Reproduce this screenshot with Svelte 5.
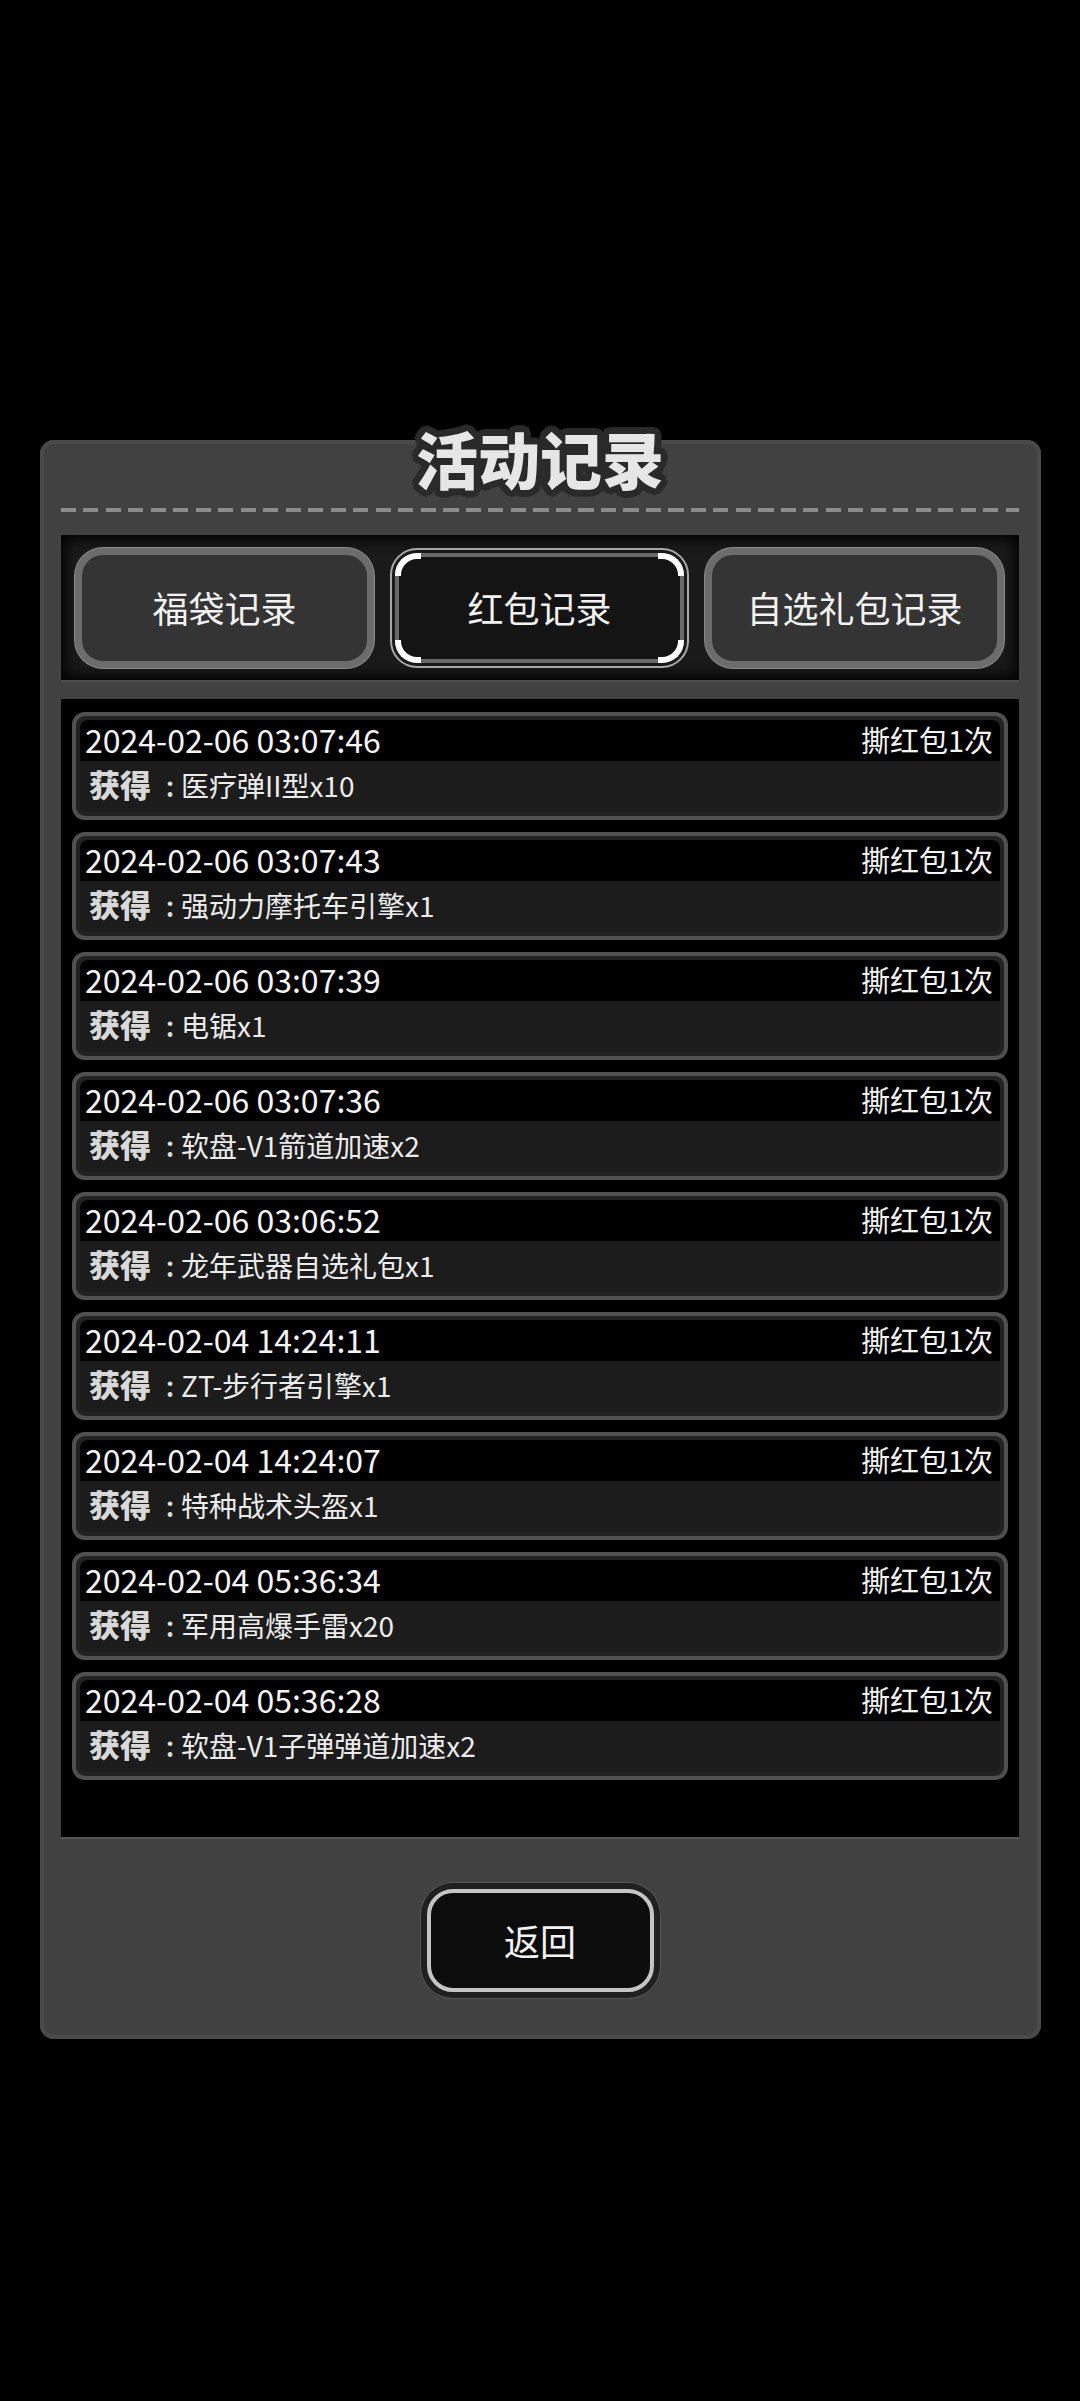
<script lang="ts">
  const tabs = [
    { label: '福袋记录', active: false },
    { label: '红包记录', active: true },
    { label: '自选礼包记录', active: false }
  ];

  const records = [
    { time: '2024-02-06 03:07:46', item: '医疗弹II型x10' },
    { time: '2024-02-06 03:07:43', item: '强动力摩托车引擎x1' },
    { time: '2024-02-06 03:07:39', item: '电锯x1' },
    { time: '2024-02-06 03:07:36', item: '软盘-V1箭道加速x2' },
    { time: '2024-02-06 03:06:52', item: '龙年武器自选礼包x1' },
    { time: '2024-02-04 14:24:11', item: 'ZT-步行者引擎x1' },
    { time: '2024-02-04 14:24:07', item: '特种战术头盔x1' },
    { time: '2024-02-04 05:36:34', item: '军用高爆手雷x20' },
    { time: '2024-02-04 05:36:28', item: '软盘-V1子弹弹道加速x2' }
  ];
</script>

<div class="screen">
  <section class="panel">
    <h1 class="title">活动记录</h1>
    <div class="dashes"></div>

    <div class="tabs">
      {#each tabs as tab}
        <button class="tab" class:active={tab.active}>
          {#if tab.active}
            <span class="corner tl"></span>
            <span class="corner tr"></span>
            <span class="corner bl"></span>
            <span class="corner br"></span>
          {/if}
          {tab.label}
        </button>
      {/each}
    </div>

    <div class="list">
      {#each records as record}
        <div class="row">
          <div class="row-head">
            <span>{record.time}</span>
            <span class="action">撕红包1次</span>
          </div>
          <div class="row-body"><b>获得<i>：</i></b><span class="item">{record.item}</span></div>
        </div>
      {/each}
    </div>

    <div class="footer">
      <button class="back">返回</button>
    </div>
  </section>
</div>

<style>
  :global(body) {
    margin: 0;
    background: #000;
  }

  .screen {
    box-sizing: border-box;
    width: 1080px;
    height: 2401px;
    padding: 440px 39px 0 40px;
    background: #000;
    font-family: "Noto Sans CJK SC", "Noto Sans", sans-serif;
    color: #f0f0f0;
  }

  .panel {
    box-sizing: border-box;
    height: 1599px;
    padding: 0 22px 0 21px;
    background: #414141;
    border-radius: 14px;
    box-shadow: inset 0 0 0 4px #4a4a4a;
  }

  .title {
    position: relative;
    top: -12px;
    margin: 0;
    height: 60px;
    font-size: 62px;
    font-weight: 900;
    line-height: 60px;
    text-align: center;
    color: #e6e6e6;
    text-shadow:
      7px 0 0 #2a2a2a, -7px 0 0 #2a2a2a, 0 7px 0 #2a2a2a, 0 -7px 0 #2a2a2a,
      5px 5px 0 #2a2a2a, -5px 5px 0 #2a2a2a, 5px -5px 0 #2a2a2a, -5px -5px 0 #2a2a2a,
      6px 3px 0 #2a2a2a, -6px 3px 0 #2a2a2a, 6px -3px 0 #2a2a2a, -6px -3px 0 #2a2a2a,
      3px 6px 0 #2a2a2a, -3px 6px 0 #2a2a2a, 3px -6px 0 #2a2a2a, -3px -6px 0 #2a2a2a;
  }

  .dashes {
    height: 4px;
    margin-top: 8px;
    background: repeating-linear-gradient(90deg, #8c8c8c 0 15px, transparent 15px 22.5px);
  }

  .tabs {
    box-sizing: border-box;
    display: grid;
    grid-template-columns: repeat(3, 299px);
    gap: 16px;
    height: 147px;
    margin-top: 23px;
    padding: 13px 14px;
    background: #1a1a1a;
    border-bottom: 2px solid #4f4f4f;
    box-shadow: inset 0 0 14px 4px #000;
  }

  .tab {
    position: relative;
    box-sizing: border-box;
    height: 120px;
    padding: 0 0 2px;
    font: inherit;
    font-size: 36px;
    color: #f2f2f2;
    background: #343434;
    border: 7px solid #6c6c6c;
    border-radius: 28px;
    box-shadow: 0 0 0 1px #8a8a8a;
  }

  .tab.active {
    background: #141414;
    border: 4px solid #686868;
    border-radius: 22px;
    outline: 2px solid #a8a8a8;
    outline-offset: 3px;
    box-shadow: none;
    margin: 5px;
    height: 110px;
    width: 289px;
  }

  .corner {
    position: absolute;
    width: 20px;
    height: 17px;
    border: 0 solid #fff;
  }

  .tl {
    top: -4px;
    left: -4px;
    border-width: 6px 0 0 6px;
    border-top-left-radius: 22px;
  }

  .tr {
    top: -4px;
    right: -4px;
    border-width: 6px 6px 0 0;
    border-top-right-radius: 22px;
  }

  .bl {
    bottom: -4px;
    left: -4px;
    border-width: 0 0 6px 6px;
    border-bottom-left-radius: 22px;
  }

  .br {
    bottom: -4px;
    right: -4px;
    border-width: 0 6px 6px 0;
    border-bottom-right-radius: 22px;
  }

  .list {
    box-sizing: border-box;
    display: flex;
    flex-direction: column;
    gap: 12px;
    height: 1140px;
    margin-top: 17px;
    padding: 13px 11px;
    background: #000;
    border-bottom: 2px solid #555;
  }

  .row {
    box-sizing: border-box;
    height: 108px;
    padding: 4px;
    background: #222;
    border: 4px solid #505050;
    border-radius: 13px;
  }

  .row-head {
    box-sizing: border-box;
    display: flex;
    justify-content: space-between;
    align-items: center;
    height: 41px;
    padding: 0 7px 2px 5px;
    background: #000;
    border-radius: 8px 8px 0 0;
    font-size: 32px;
    line-height: 39px;
    color: #f4f4f4;
  }

  .action {
    font-size: 29px;
  }

  .row-body {
    box-sizing: border-box;
    display: flex;
    align-items: center;
    height: 51px;
    padding: 0 0 2px 9px;
    background: #1c1c1c;
    border-radius: 0 0 8px 8px;
    font-size: 28px;
    line-height: 49px;
    color: #ececec;
  }

  .row-body b {
    width: 92px;
    font-size: 31px;
    font-weight: 900;
    color: #d8d8d8;
    white-space: nowrap;
  }

  .row-body i {
    margin-left: 8px;
    font-family: "Noto Sans CJK TC", sans-serif;
    font-size: 22px;
    font-style: normal;
  }

  .footer {
    display: flex;
    justify-content: center;
    align-items: center;
    height: 197px;
    padding-top: 6px;
    box-sizing: border-box;
  }

  .back {
    box-sizing: border-box;
    width: 227px;
    height: 103px;
    padding: 0 0 2px;
    font: inherit;
    font-size: 36px;
    color: #f2f2f2;
    background: #0c0c0c;
    border: 4px solid #c4c4c4;
    border-radius: 26px;
    box-shadow: 0 0 0 6px #202020, 0 0 0 7px #555;
  }
</style>
